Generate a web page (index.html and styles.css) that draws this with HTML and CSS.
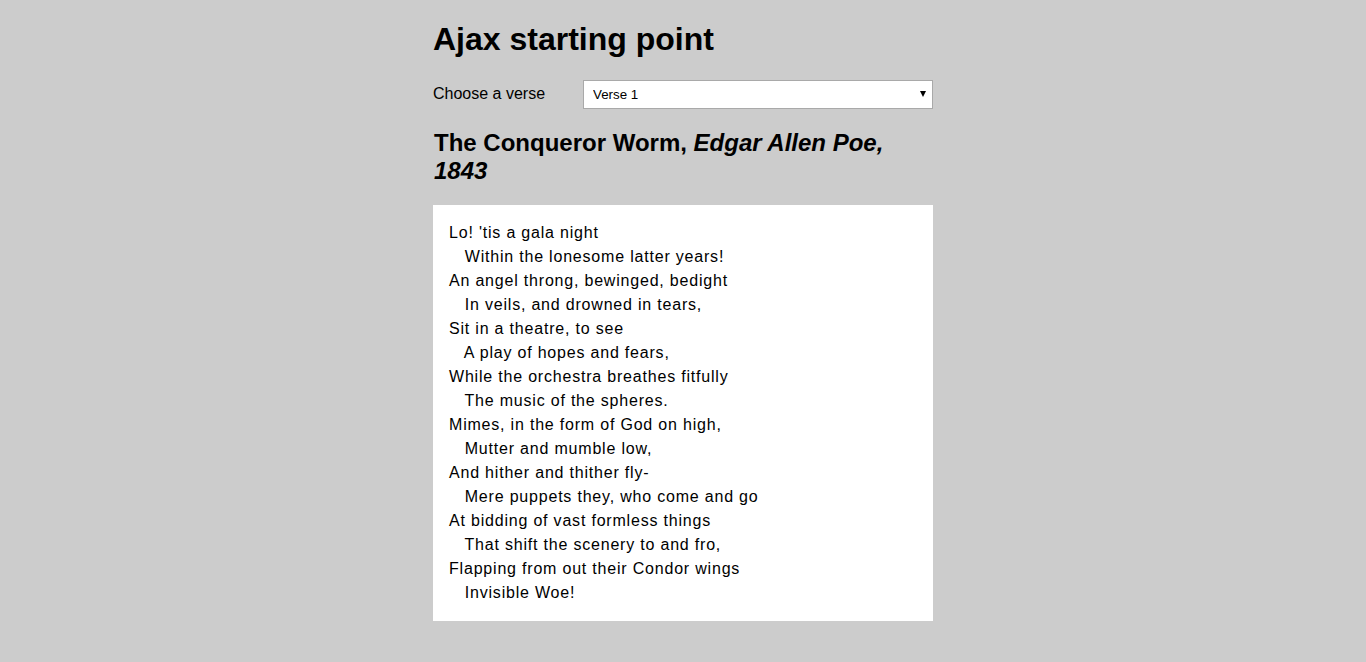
FILE: index.html
```html
<!DOCTYPE html>
<html lang="en">
<head>
<meta charset="utf-8">
<title>Ajax starting point</title>
<link rel="stylesheet" href="styles.css">
</head>
<body>
<h1>Ajax starting point</h1>
<form class="chooser">
  <label for="verse-choose">Choose a verse</label>
  <span class="select-wrap">
    <select id="verse-choose" name="verse-choose">
      <option>Verse 1</option>
      <option>Verse 2</option>
      <option>Verse 3</option>
      <option>Verse 4</option>
    </select>
  </span>
</form>
<h2>The Conqueror Worm, <em>Edgar Allen Poe, 1843</em></h2>
<pre class="poem">Lo! 'tis a gala night
   Within the lonesome latter years!
An angel throng, bewinged, bedight
   In veils, and drowned in tears,
Sit in a theatre, to see
   A play of hopes and fears,
While the orchestra breathes fitfully
   The music of the spheres.
Mimes, in the form of God on high,
   Mutter and mumble low,
And hither and thither fly-
   Mere puppets they, who come and go
At bidding of vast formless things
   That shift the scenery to and fro,
Flapping from out their Condor wings
   Invisible Woe!</pre>
</body>
</html>
```

FILE: styles.css
```css
html, pre {
  font-family: "Liberation Sans", Arial, sans-serif;
}
body {
  width: 500px;
  margin: 0 auto;
  background-color: #ccc;
  color: #000;
}
h1 {
  font-size: 32px;
  margin: 21.44px 0;
}
h2 {
  font-size: 24px;
  margin: 19.92px 0;
  padding-left: 1px;
}
.chooser {
  display: flex;
  align-items: center;
}
.chooser label {
  font-size: 16px;
  width: 150px;
}
.select-wrap {
  position: relative;
  display: inline-block;
}
.select-wrap select {
  -webkit-appearance: none;
  appearance: none;
  width: 350px;
  height: 29px;
  padding: 5px 9px;
  font-family: "Liberation Sans", Arial, sans-serif;
  font-size: 13.33px;
  color: #000;
  background: #fff;
  border: 1px solid #a9a9a9;
  border-radius: 0;
  display: block;
}
.select-wrap::after {
  content: "";
  position: absolute;
  right: 7px;
  top: 11px;
  width: 0;
  height: 0;
  border-left: 3.5px solid transparent;
  border-right: 3.5px solid transparent;
  border-top: 6px solid #000;
  pointer-events: none;
}
.poem {
  font-size: 16px;
  line-height: 1.5;
  letter-spacing: 0.05rem;
  padding: 1rem;
  margin: 16px 0;
  background-color: #fff;
  color: #000;
}
```
